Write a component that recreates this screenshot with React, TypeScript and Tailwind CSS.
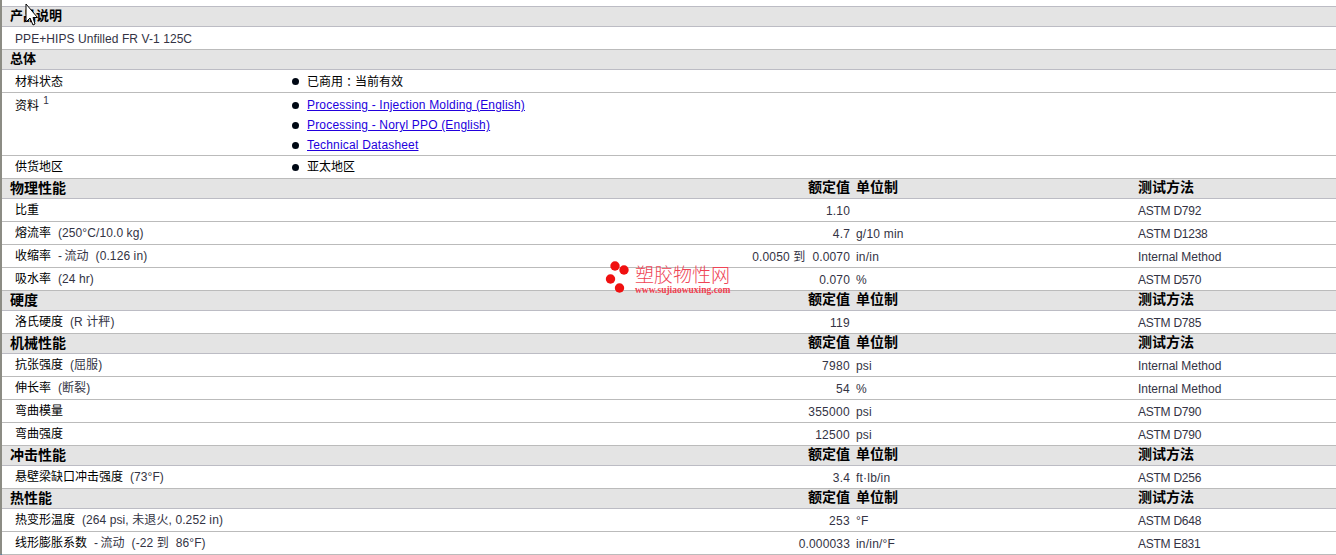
import React from 'react';

const cjk = "font-['Liberation_Sans','Noto_Sans_CJK_SC',sans-serif]";

type SectionRow = { label: string; note?: string; value: string; unit?: string; method: string };
type Section = { title: string; rows: SectionRow[] };

const sections: Section[] = [
  {
    title: '物理性能',
    rows: [
      { label: '比重', value: '1.10', method: 'ASTM D792' },
      { label: '熔流率', note: '  (250°C/10.0 kg)', value: '4.7', unit: 'g/10 min', method: 'ASTM D1238' },
      { label: '收缩率', note: '  -\u2009流动  (0.126 in)', value: '0.0050 到  0.0070', unit: 'in/in', method: 'Internal Method' },
      { label: '吸水率', note: '  (24 hr)', value: '0.070', unit: '%', method: 'ASTM D570' },
    ],
  },
  {
    title: '硬度',
    rows: [{ label: '洛氏硬度', note: '  (R 计秤)', value: '119', method: 'ASTM D785' }],
  },
  {
    title: '机械性能',
    rows: [
      { label: '抗张强度', note: '  (屈服)', value: '7980', unit: 'psi', method: 'Internal Method' },
      { label: '伸长率', note: '  (断裂)', value: '54', unit: '%', method: 'Internal Method' },
      { label: '弯曲模量', value: '355000', unit: 'psi', method: 'ASTM D790' },
      { label: '弯曲强度', value: '12500', unit: 'psi', method: 'ASTM D790' },
    ],
  },
  {
    title: '冲击性能',
    rows: [{ label: '悬壁梁缺口冲击强度', note: '  (73°F)', value: '3.4', unit: 'ft·lb/in', method: 'ASTM D256' }],
  },
  {
    title: '热性能',
    rows: [
      { label: '热变形温度', note: '  (264 psi, 未退火, 0.252 in)', value: '253', unit: '°F', method: 'ASTM D648' },
      { label: '线形膨胀系数', note: '  -\u2009流动  (-22 到  86°F)', value: '0.000033', unit: 'in/in/°F', method: 'ASTM E831' },
    ],
  },
];

function Header({ title, columns, small }: { title: string; columns?: boolean; small?: boolean }) {
  return (
    <div className={`flex h-[20px] items-center border-b border-[#bcbcc4] bg-[#e4e4e4] pb-[2px] pl-[8px] font-bold leading-none text-black ${small ? 'text-[13px]' : 'text-[14px]'}`}>
      <div className="flex-1">{title}</div>
      {columns && (
        <>
          <div className="mb-[2px] w-[42px] text-right">额定值</div>
          <div className="mb-[2px] ml-[6px] w-[282px]">单位制</div>
          <div className="mb-[2px] w-[198px]">测试方法</div>
        </>
      )}
    </div>
  );
}

function DataRow({ row }: { row: SectionRow }) {
  const methodSpacing = row.method.startsWith('ASTM') ? 'tracking-[-0.25px]' : '';
  const valueSpacing = row.value.includes('.') ? 'tracking-[0.15px]' : 'tracking-[0.3px]';
  return (
    <div className="flex h-[23px] border-b border-[#bbbbbb] text-[12px] leading-none text-[#333344]">
      <div className="flex-1 whitespace-pre pl-[13px] pt-[5px]">
        <span className="text-black">{row.label}</span>
        {row.note && <span className="tracking-[0.1px]">{row.note}</span>}
      </div>
      <div className={`whitespace-pre pt-[6px] text-right ${valueSpacing}`}>{row.value}</div>
      <div className="ml-[6px] w-[282px] pt-[6px] tracking-[0.2px]">{row.unit}</div>
      <div className={`w-[198px] pt-[6px] ${methodSpacing}`}>{row.method}</div>
    </div>
  );
}

function Bullet({ children }: { children: React.ReactNode }) {
  return (
    <div className="flex h-[20px] items-center">
      <span className="ml-[290px] mr-[8px] h-[7px] w-[7px] rounded-full bg-[#000814]" />
      {children}
    </div>
  );
}

function DocLink({ children }: { children: React.ReactNode }) {
  return <a className="tracking-[0.18px] text-[#2200dd] underline">{children}</a>;
}

export default function App() {
  return (
    <div className={`relative h-[555px] w-[1336px] overflow-hidden bg-white ${cjk}`}>
      <div className="h-[555px] border-b border-[#3c80b8] border-l-2 border-l-[#8c8c84]">
        <div className="h-[6px]" />
        <div className="border-t border-[#bcbcc4]">
          <Header title="产品说明" small />
        </div>
        <div className="h-[23px] border-b border-[#bbbbbb] pl-[13px] pt-[6px] text-[12px] leading-none tracking-[0.07px] text-[#333344]">
          PPE+HIPS Unfilled FR V-1 125C
        </div>
        <Header title="总体" small />
        <div className="relative h-[23px] border-b border-[#bbbbbb] text-[12px] text-black">
          <div className="flex h-full items-center pt-[1px]">
            <div className="absolute left-[13px]">材料状态</div>
            <Bullet>
              已商用<span className="font-['Noto_Sans_CJK_TC',sans-serif]">：</span>当前有效
            </Bullet>
          </div>
        </div>
        <div className="relative h-[63px] border-b border-[#bbbbbb] pt-[2px] text-[12px] text-black">
          <div className="absolute left-[13px] top-[4px]">
            资料 <sup className="top-[-6px] ml-[1px] text-[10px] text-[#333344]">1</sup>
          </div>
          <Bullet><DocLink>Processing - Injection Molding (English)</DocLink></Bullet>
          <Bullet><DocLink>Processing - Noryl PPO (English)</DocLink></Bullet>
          <Bullet><DocLink>Technical Datasheet</DocLink></Bullet>
        </div>
        <div className="relative h-[23px] border-b border-[#bbbbbb] text-[12px] text-black">
          <div className="flex h-full items-center">
            <div className="absolute left-[13px]">供货地区</div>
            <Bullet>亚太地区</Bullet>
          </div>
        </div>
        {sections.map((section) => (
          <div key={section.title}>
            <Header title={section.title} columns />
            {section.rows.map((row) => (
              <DataRow key={row.label} row={row} />
            ))}
          </div>
        ))}
      </div>

      {/* 水印 */}
      <div className="absolute left-[605px] top-[261px] flex gap-[5px]">
        <svg width="25" height="33" viewBox="0 0 25 33">
          <circle cx="10" cy="5" r="4.7" fill="#f01010" />
          <circle cx="19" cy="9" r="4.7" fill="#f01010" />
          <circle cx="5.5" cy="18" r="4.7" fill="#f01010" />
          <circle cx="14.5" cy="27" r="4.7" fill="#f01010" />
        </svg>
        <div className="flex flex-col items-start">
          <div className="mt-[5px] text-[19px] font-light leading-[19px] text-[#ee4455]">塑胶物性网</div>
          <div className="font-['Liberation_Serif',serif] text-[9.5px] font-bold leading-[11px] text-[#f04050]">www.sujiaowuxing.com</div>
        </div>
      </div>

      {/* 鼠标 */}
      <svg className="absolute left-[25px] top-[3px]" width="14" height="24" viewBox="0 0 14 24">
        <path d="M1 1V19L5 15L8 22L10 21L8 14.5H12.5Z" fill="white" stroke="black" strokeWidth="1" />
      </svg>
    </div>
  );
}
